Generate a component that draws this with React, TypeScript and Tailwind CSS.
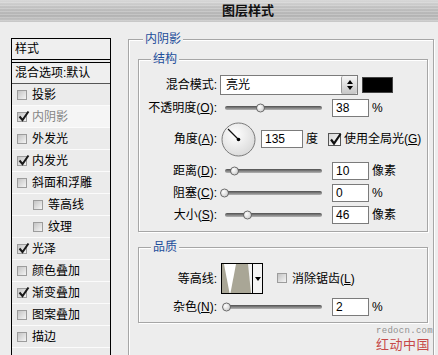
import React from "react";

function SmallBox({ checked }: { checked?: boolean }) {
  return (
    <span className="relative inline-block w-[10px] h-[10px] shrink-0 border border-[#9c9c9c] bg-[linear-gradient(135deg,#c4c4c4,#f4f4f4)]">
      {checked && (
        <svg className="absolute left-[0px] top-[-3px]" width="12" height="12" viewBox="0 0 12 12">
          <path d="M1.5 6.5 L4.5 10 L10.5 1.5" stroke="#1a1a1a" strokeWidth="2" fill="none" />
        </svg>
      )}
    </span>
  );
}

function ListRow({
  label,
  checked,
  indent,
  selected,
}: {
  label: string;
  checked?: boolean;
  indent?: boolean;
  selected?: boolean;
}) {
  return (
    <div
      className={`h-[22px] flex items-center gap-[5px] border-b border-[#fbfbfb] ${
        selected ? "bg-[#f5f5f5] text-[#858585]" : "bg-[#ebebeb] text-black"
      } ${indent ? "pl-[21px]" : "pl-[5px]"}`}
    >
      <SmallBox checked={checked} />
      <span>{label}</span>
    </div>
  );
}

function LeftList() {
  return (
    <div className="ml-[11px] mt-[16px] w-[100px] h-[345px] border border-black bg-[#ebebeb]">
      <div className="h-[21px] flex items-center pl-[3px] border-b border-black bg-[#efefef]">样式</div>
      <div className="mt-[2px] h-[22px] flex items-center pl-[3px] border-t border-b border-t-black border-b-[#555555] bg-[#efefef]">
        混合选项:默认
      </div>
      <ListRow label="投影" />
      <ListRow label="内阴影" checked selected />
      <ListRow label="外发光" />
      <ListRow label="内发光" checked />
      <ListRow label="斜面和浮雕" />
      <ListRow label="等高线" indent />
      <ListRow label="纹理" indent />
      <ListRow label="光泽" checked />
      <ListRow label="颜色叠加" />
      <ListRow label="渐变叠加" checked />
      <ListRow label="图案叠加" />
      <ListRow label="描边" />
    </div>
  );
}

function Label({ text, k }: { text: string; k?: string }) {
  return (
    <div className="w-[81px] shrink-0 text-right pr-[3px] whitespace-nowrap">
      {text}
      {k ? (
        <>
          (<u>{k}</u>):
        </>
      ) : (
        ":"
      )}
    </div>
  );
}

function Slider({ pos }: { pos: number }) {
  return (
    <div className="relative w-[112px] h-full shrink-0 flex items-center">
      <div className="ml-[5px] w-[97px] h-[4px] rounded-[2px] bg-[linear-gradient(to_bottom,#4e4e4e,#8c8c8c_60%,#b4b4b4)]" />
      <div
        className="absolute top-1/2 -translate-y-1/2 w-[9px] h-[9px] rounded-full border border-[#6a6a6a] bg-[radial-gradient(circle_at_35%_35%,#ffffff,#c2c2c2)]"
        style={{ left: pos - 220 - 4 }}
      />
    </div>
  );
}

function Input({ value, w = "w-[37px]" }: { value: string; w?: string }) {
  return (
    <div className={`${w} h-[18px] shrink-0 border border-[#7b7b7b] bg-white pl-[3px] leading-[16px] text-[12px]`}>
      {value}
    </div>
  );
}

function SliderRow({
  text,
  k,
  pos,
  value,
  unit,
}: {
  text: string;
  k: string;
  pos: number;
  value: string;
  unit: string;
}) {
  return (
    <div className="mt-[3px] h-[19px] flex items-center">
      <Label text={text} k={k} />
      <Slider pos={pos} />
      <Input value={value} />
      <span className="ml-[3px]">{unit}</span>
    </div>
  );
}

function Dial() {
  return (
    <svg width="35" height="35" viewBox="0 0 35 35" className="ml-[1px] shrink-0">
      <defs>
        <radialGradient id="dialg" cx="40%" cy="35%" r="70%">
          <stop offset="0%" stopColor="#ffffff" />
          <stop offset="100%" stopColor="#d9d9d9" />
        </radialGradient>
      </defs>
      <circle cx="17.5" cy="17.5" r="16.5" fill="url(#dialg)" stroke="#7a7a7a" strokeWidth="1" />
      <line x1="17.5" y1="17.5" x2="7" y2="7" stroke="#111" strokeWidth="1.2" />
      <circle cx="17.5" cy="17.5" r="1.8" fill="#000" />
    </svg>
  );
}

function Contour() {
  return (
    <div className="ml-[1px] w-[42px] h-[31px] shrink-0 flex border border-black bg-white">
      <svg width="30" height="29" viewBox="0 0 30 29" className="shrink-0">
        <rect width="30" height="29" fill="#a9a696" />
        <polygon points="2,0 14,0 8.5,29 7.5,29" fill="#ffffff" />
        <polygon points="26,0 30,0 30,29 29,29" fill="#f4f4f4" />
      </svg>
      <div className="w-[10px] h-full border-l border-black flex items-center justify-center bg-[#f4f4f4]">
        <svg width="6" height="4" viewBox="0 0 6 4">
          <polygon points="0,0 6,0 3,4" fill="#000" />
        </svg>
      </div>
    </div>
  );
}

const fs =
  "border border-[#a6a6a6] shadow-[1px_1px_0_#ffffff,inset_1px_1px_0_#ffffff] min-w-0";
const lg = "px-[2px] leading-[14px] text-[#1d4d9b] bg-[#ededed]";

export default function App() {
  return (
    <div className="relative w-[438px] h-[355px] overflow-hidden bg-[#ededed] text-[12px] leading-[14px] text-black [font-family:'Liberation_Sans','Noto_Sans_CJK_SC',sans-serif]">
      <div className="h-[22px] flex items-center justify-center pl-[58px] bg-[repeating-linear-gradient(to_bottom,rgba(255,255,255,0)_0px,rgba(255,255,255,0)_2px,rgba(255,255,255,0.22)_2px,rgba(255,255,255,0.22)_3px),linear-gradient(to_bottom,#d9d9d9,#c1c1c1_35%,#b3b3b3_75%,#c4c4c4)] border-b border-[#c8c8c8] text-[13px] font-bold text-[#111]">
        图层样式
      </div>
      <div className="flex items-start">
        <LeftList />
        <fieldset className={`ml-[17px] mt-[10px] w-[306px] pb-[60px] ${fs}`}>
          <legend className={`ml-[14px] ${lg}`}>内阴影</legend>

          <fieldset className={`ml-[9px] mt-[6px] w-[290px] pt-[9px] pb-[7px] ${fs}`}>
            <legend className={`ml-[12px] ${lg}`}>结构</legend>
            <div className="h-[20px] flex items-center">
              <Label text="混合模式" />
              <div className="w-[138px] h-[20px] shrink-0 flex border border-[#7b7b7b] bg-white">
                <div className="flex-1 pl-[5px] flex items-center">亮光</div>
                <div className="w-[16px] h-full flex flex-col items-center justify-center gap-[2px] rounded-[2px] border-l border-[#9a9a9a] bg-[linear-gradient(to_bottom,#f6f6f6,#c6c6c6)]">
                  <svg width="6" height="4" viewBox="0 0 6 4">
                    <polygon points="3,0 6,4 0,4" fill="#000" />
                  </svg>
                  <svg width="6" height="4" viewBox="0 0 6 4">
                    <polygon points="0,0 6,0 3,4" fill="#000" />
                  </svg>
                </div>
              </div>
              <div className="ml-[4px] w-[31px] h-[16px] bg-black border border-[#444]" />
            </div>
            <SliderRow text="不透明度" k="O" pos={260} value="38" unit="%" />
            <div className="mt-[3px] h-[38px] flex items-center">
              <Label text="角度" k="A" />
              <Dial />
              <div className="ml-[5px]">
                <Input value="135" w="w-[42px]" />
              </div>
              <span className="ml-[3px]">度</span>
              <span className="ml-[10px] relative w-[13px] h-[13px] shrink-0 border border-[#555] bg-[linear-gradient(135deg,#d8d8d8,#ffffff)]">
                <svg className="absolute left-[0px] top-[-2px]" width="13" height="14" viewBox="0 0 13 14">
                  <path d="M2 7.5 L5 11.5 L11.5 2" stroke="#111" strokeWidth="2.2" fill="none" />
                </svg>
              </span>
              <span className="ml-[3px] whitespace-nowrap">
                使用全局光(<u>G</u>)
              </span>
            </div>
            <SliderRow text="距离" k="D" pos={234} value="10" unit="像素" />
            <SliderRow text="阻塞" k="C" pos={224} value="0" unit="%" />
            <SliderRow text="大小" k="S" pos={247} value="46" unit="像素" />
          </fieldset>

          <fieldset className={`ml-[9px] mt-[8px] w-[290px] pt-[9px] pb-[6px] ${fs}`}>
            <legend className={`ml-[12px] ${lg}`}>品质</legend>
            <div className="h-[31px] flex items-center">
              <Label text="等高线" />
              <Contour />
              <span className="ml-[14px]">
                <SmallBox />
              </span>
              <span className="ml-[5px] whitespace-nowrap">
                消除锯齿(<u>L</u>)
              </span>
            </div>
            <div className="mt-[1px]">
              <SliderRow text="杂色" k="N" pos={226} value="2" unit="%" />
            </div>
          </fieldset>
        </fieldset>
      </div>
      <div className="absolute left-[376px] top-[326px] flex flex-col items-start">
        <span className="text-[9px] leading-[11px] tracking-[0.3px] text-[#8f8f8f] [font-family:'Liberation_Mono',monospace]">redocn.com</span>
        <span className="text-[13px] leading-[15px] text-[#c64848] tracking-[0.5px]">红动中国</span>
      </div>
    </div>
  );
}
